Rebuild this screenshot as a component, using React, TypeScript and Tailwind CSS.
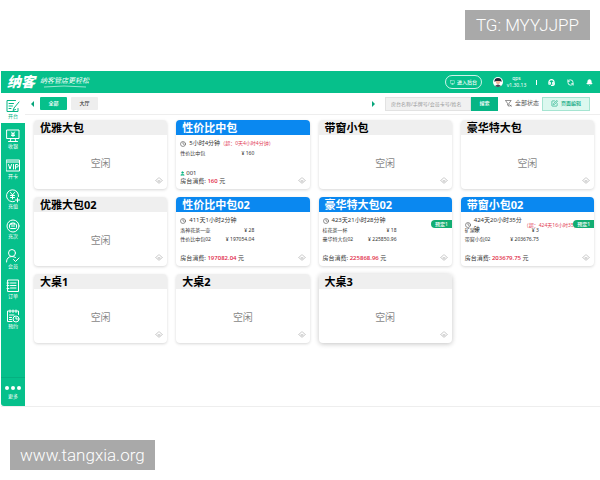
import React from "react";
import { Bell, Clock, Headset, RefreshCcw, SquarePen, Monitor, User } from "lucide-react";

type Line = { name: string; price: string };
type Room = {
  name: string;
  time?: string;
  over?: string;
  lines?: Line[];
  guest?: string;
  total?: string;
  booked?: boolean;
  wrapped?: boolean;
  active?: boolean;
};

const rooms: Room[] = [
  { name: "优雅大包" },
  { name: "性价比中包", time: "5小时4分钟", over: "（超：0天4小时4分钟）", lines: [{ name: "性价比中包", price: "¥ 160" }], guest: "001", total: "160" },
  { name: "带窗小包" },
  { name: "豪华特大包" },
  { name: "优雅大包02" },
  { name: "性价比中包02", time: "411天1小时2分钟", lines: [{ name: "洛神花茶一壶", price: "¥ 28" }, { name: "性价比中包02", price: "¥ 197054.04" }], total: "197082.04" },
  { name: "豪华特大包02", time: "423天21小时28分钟", lines: [{ name: "桂花茶一杯", price: "¥ 18" }, { name: "豪华特大包02", price: "¥ 225850.96" }], total: "225868.96", booked: true },
  { name: "带窗小包02", time: "424天20小时35分钟", over: "（超：424天16小时35分钟）", lines: [{ name: "矿泉水", price: "¥ 3" }, { name: "带窗小包02", price: "¥ 203676.75" }], total: "203679.75", booked: true, wrapped: true },
  { name: "大桌1" },
  { name: "大桌2" },
  { name: "大桌3", active: true },
];

const Icon = ({ children }: { children: React.ReactNode }) => (
  <svg viewBox="0 0 28 28" className="size-[14px] shrink-0" fill="none" stroke="currentColor" strokeWidth="2" strokeLinecap="round" strokeLinejoin="round" aria-hidden="true">
    {children}
  </svg>
);

const nav = [
  { label: "开台", icon: <Icon><path d="M19 3H2v22h22v-6M6 9h9M6 14h7M6 19h4M26 6 16 18l-2 5 5-2" /></Icon> },
  { label: "收银", icon: <Icon><path d="M2 2h24v17H2zM10 19l-2 6M18 19l2 6M5 25h18M11 6l3 4 3-4M14 10v5M11 10h6M11 13h6" /></Icon> },
  { label: "开卡", icon: <Icon><path d="M1 2h26v22H1zM1 6h26M5 11l3 9 3-9M15 11v9M19 20v-9h3a2 2 0 0 1 0 5h-3" /></Icon> },
  { label: "充值", icon: <Icon><path d="M25 15a12 12 0 1 0-8 10M9 7l4 5 4-5M13 12v8M9 13h8M9 17h8M23 18v8M19 22h8" /></Icon> },
  { label: "充次", icon: <Icon><circle cx="14" cy="14" r="12" /><path d="M9 10h10a2 2 0 0 1 2 2v5a2 2 0 0 1-2 2H9a2 2 0 0 1-2-2v-5a2 2 0 0 1 2-2zM11 10V8h6v2M11 14h6" /></Icon> },
  { label: "会员", icon: <Icon><circle cx="12" cy="8" r="7" /><path d="M1 26c0-7 4-11 11-11 3 0 5 1 7 2M15 21l4 4 7-7" /></Icon> },
  { label: "订单", icon: <Icon><path d="M4 2h21v23H4zM9 8h11M9 13h11M9 18h11M2 8h4M2 13h4M2 19h4" /></Icon> },
  { label: "预约", icon: <Icon><path d="M25 11V4H3v21h9M8 2v5M14 2v5M20 2v5M7 12h9M7 17h4M7 21h4" /><circle cx="20" cy="20" r="6" /><path d="M20 17v3h3" /></Icon> },
];

const CleanMark = () => (
  <svg viewBox="0 0 16 14" className="absolute right-[4px] bottom-[5px] h-[7px] w-[8px] text-[#bdbdbd]" fill="none" stroke="currentColor" strokeWidth="1.5" strokeLinejoin="round" aria-hidden="true">
    <path d="M1 7l4-3 3-3 3 3 4 3-4 3-3 3-3-3zM5 6l3 2 3-2M5 9l3 1 3-1" />
  </svg>
);

function RoomCard({ room }: { room: Room }) {
  const busy = !!room.time;
  return (
    <article className={"relative flex h-[69px] flex-col overflow-hidden rounded-[4px] bg-white " + (room.active ? "shadow-[0_1px_5px_rgba(0,0,0,0.24)]" : "shadow-[0_1px_3px_rgba(0,0,0,0.16)]")}>
      <h2 className={"h-[15px] shrink-0 pl-[6px] text-[11px] leading-[15px] font-bold " + (busy ? "bg-[#0a88f0] text-white" : "bg-[#efefef] text-black")}>{room.name}</h2>
      {busy ? (
        <div className="flex flex-1 flex-col px-[4px] pb-[4px] text-[6px] leading-[8px] text-[#333]">
          <div className={"mt-[4px] flex items-center leading-[9px] whitespace-nowrap " + (room.wrapped ? "-mb-[9px] h-[18px]" : "h-[9px]")}>
            <Clock className="mr-[3px] size-[6px] shrink-0" />
            <span className={room.wrapped ? "w-[50px] shrink-0 break-all whitespace-normal" : ""}>{room.time}</span>
            {room.over && <span className="text-[5px] text-[#e23c55]">{room.over}</span>}
          </div>
          <ul className="text-[5px]">
            {room.lines!.map((l) => (
              <li key={l.name} className="flex h-[9px] w-[74px] items-center justify-between whitespace-nowrap">
                <span>{l.name}</span>
                <span>{l.price}</span>
              </li>
            ))}
          </ul>
          <div className="mt-auto">
            {room.guest && (
              <p className="flex items-center gap-[1px]">
                <User className="size-[5px] fill-[#12b886] text-[#12b886]" strokeWidth={3} />
                {room.guest}
              </p>
            )}
            <p>房台消费: <b className="font-medium text-[#e0203c]">{room.total}</b> 元</p>
          </div>
        </div>
      ) : (
        <p className="flex flex-1 items-center justify-center pt-[2px] text-[10px] text-[#888]">空闲</p>
      )}
      {room.booked && <span className="absolute top-[23px] right-0 h-[8px] rounded-l-full bg-[#12ad72] px-[4px] text-[5px] leading-[8px] font-medium text-white">预定1</span>}
      <CleanMark />
    </article>
  );
}

export default function App() {
  return (
    <div className="relative min-h-screen bg-white pt-[71px] pl-px font-['Noto_Sans','Noto_Sans_CJK_SC',sans-serif]">
      <header className="flex h-[22px] items-center bg-[#06c08b] pr-[7px] pl-[6px] text-white">
        <h1 className="text-[14px] leading-[20px] font-black italic">纳客</h1>
        <div className="ml-[5px] flex flex-col items-center">
          <span className="text-[7px] leading-[9px] italic">纳客管店更轻松</span>
          <svg viewBox="0 0 44 3" className="h-[3px] w-[44px]" fill="none" stroke="currentColor" strokeWidth="0.6" aria-hidden="true"><path d="M1 2Q20 0 43 2" /></svg>
        </div>
        <button className="ml-auto flex h-[14px] w-[37px] items-center justify-center gap-[2px] rounded-full border border-white/80 text-[5px] leading-[8px] font-medium">
          <Monitor className="size-[5px]" />进入后台
        </button>
        <svg viewBox="0 0 20 20" className="ml-[11px] size-[10px]" aria-hidden="true">
          <circle cx="10" cy="10" r="10" fill="#fff" />
          <path d="M3 10Q2 2 10 2T17 10L14 8H6z" fill="#223" />
          <path d="M6 8h8v4q-4 5-8 0z" fill="#f3b79c" />
          <path d="M4 18q6-6 12 0-6 4-12 0" fill="#445" />
        </svg>
        <div className="ml-[3px] w-[21px] text-center text-[5px] leading-[7px]">qps<br />v1.30.13</div>
        <span className="ml-[9px] h-[5px] w-px bg-white" />
        <button aria-label="客服" className="ml-[11px]"><Headset className="size-[7px]" strokeWidth={4} /></button>
        <button aria-label="刷新" className="ml-[12px]"><RefreshCcw className="size-[7px]" strokeWidth={3} /></button>
        <button aria-label="通知" className="ml-[12px]"><Bell className="size-[7px] fill-white" /></button>
      </header>
      <div className="flex h-[314px] border-b border-[#eee]">
        <nav className="flex w-[24px] shrink-0 flex-col overflow-hidden rounded-bl-[3px] bg-[#06c08b]">
          {nav.map((n, i) => (
            <button key={n.label} className={"flex h-[30px] shrink-0 flex-col items-center pt-[6px] " + (i === 0 ? "bg-white text-[#06b585]" : "text-white")}>
              {n.icon}
              <span className="text-[5px] leading-[7px]">{n.label}</span>
            </button>
          ))}
          <button className="mt-auto flex h-[29px] flex-col items-center border-t border-[#05b080] pt-[7px] text-white">
            <span className="flex gap-[2px] py-[1px]">
              <i className="size-[4px] rounded-full bg-white" />
              <i className="size-[4px] rounded-full bg-white" />
              <i className="size-[4px] rounded-full bg-white" />
            </span>
            <span className="text-[5px] leading-[10px]">更多</span>
          </button>
        </nav>
        <main className="min-w-0 flex-1">
          <div className="flex h-[22px] items-center border-b border-[#eee] pr-[10px] pl-[6px] text-[6px] leading-[9px]">
            <button aria-label="上一页" className="border-y-[3px] border-r-[3px] border-y-transparent border-r-[#06a57a]" />
            <button className="ml-[6px] h-[13px] w-[27px] rounded-[1px] bg-[#06c08b] text-[5px] font-medium text-white">全部</button>
            <button className="ml-[4px] h-[13px] w-[27px] rounded-[1px] bg-[#eee] text-[5px] font-medium text-[#333]">大厅</button>
            <button aria-label="下一页" className="ml-auto border-y-[3px] border-l-[3px] border-y-transparent border-l-[#06a57a]" />
            <input aria-label="搜索房台" placeholder="房台名称/手牌号/会员卡号/姓名" className="ml-[10px] h-[14px] w-[86px] border border-[#e2e2e2] bg-[#f1f1f1] px-[5px] text-[5px] placeholder:text-[#999]" />
            <button className="h-[14px] w-[27px] bg-[#06b585] text-[5px] font-medium text-white">搜索</button>
            <svg viewBox="0 0 16 16" className="ml-[7px] size-[7px] text-[#555]" fill="none" stroke="currentColor" strokeWidth="1.5" aria-hidden="true"><path d="M1 1h13L9 8v6l-3-2V8zM11 11l4 4M15 11l-4 4" /></svg>
            <span className="ml-[3px] text-[#555]">全部状态</span>
            <button className="ml-[3px] flex h-[14px] w-[48px] items-center justify-center gap-[3px] border border-[#a5e4d1] bg-[#dcf8ef] text-[5px] font-medium text-[#06a57a]">
              <SquarePen className="size-[7px]" />页面编辑
            </button>
          </div>
          <div className="grid grid-cols-4 gap-x-[9px] gap-y-[8px] pt-[5px] pr-[6px] pl-[9px]">
            {rooms.map((r) => <RoomCard key={r.name} room={r} />)}
          </div>
        </main>
      </div>
      <div className="absolute top-[10px] right-[10px] h-[30px] bg-[#a9a9a9] px-[11px] font-['Roboto',sans-serif] text-[17px] leading-[30px] font-light text-white">TG: MYYJJPP</div>
      <div className="absolute bottom-[10px] left-[10px] h-[30px] bg-[#a9a9a9] px-[10px] font-['Roboto',sans-serif] text-[17px] leading-[30px] font-light text-white">www.tangxia.org</div>
    </div>
  );
}
